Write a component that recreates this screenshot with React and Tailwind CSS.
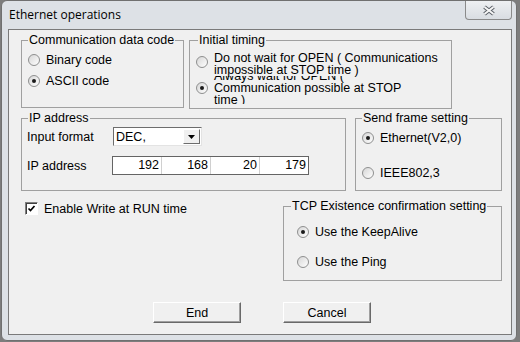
import React from 'react';

const Radio = ({ checked }) => (
  <span className="flex h-[12px] w-[12px] shrink-0 items-center justify-center rounded-full border border-[#8e8f8f] bg-linear-to-br from-[#d6d6d6] to-white">
    {checked && <span className="h-[4px] w-[4px] rounded-full bg-[#1a1a1a]" />}
  </span>
);

const Option = ({ checked, children }) => (
  <div className="flex h-[16px] items-center gap-[6px]">
    <Radio checked={checked} />
    <span className="whitespace-nowrap leading-[14px]">{children}</span>
  </div>
);

// group box with its caption laid over the top line
const Group = ({ label, labelClass = 'left-[6px]', className, children }) => (
  <div className={`relative border border-[#a0a0a0] ${className}`}>
    <span className={`absolute -top-[8px] whitespace-nowrap bg-[#f0f0f0] px-[1px] leading-[14px] ${labelClass}`}>
      {label}
    </span>
    {children}
  </div>
);

const DialogButton = ({ children }) => (
  <button className="h-[21px] w-[88px] border border-t-white border-l-white border-b-[#696969] border-r-[#696969] bg-[#f0f0f0] leading-[14px] shadow-[inset_-1px_-1px_0_#a0a0a0]">
    {children}
  </button>
);

const App = () => {
  const ip = ['192', '168', '20', '179'];

  return (
    <div className="h-[342px] w-[520px] bg-[#7d7d7d] font-['Liberation_Sans',Arial,sans-serif] text-[12.5px] text-black">
      <div className="ml-[1px] flex h-[341px] w-[516px] flex-col rounded-[6px] border border-[#707070] bg-[#dde1e6]">
        {/* Title bar */}
        <div className="flex h-[28px] items-start">
          <span className="ml-[7px] mt-[6px] font-['Open_Sans',sans-serif] text-[12px] leading-[16px]">
            Ethernet operations
          </span>
          <button className="ml-auto mr-[4px] flex h-[19px] w-[47px] items-center justify-center rounded-b-[4px] border border-t-0 border-[#8a8a8a] bg-linear-to-b from-[#eef0f2] to-[#d9dde2]">
            <svg width="14" height="11" viewBox="0 0 14 11">
              <path d="M2.5 2L11.5 9M11.5 2L2.5 9" stroke="#5a5f66" strokeWidth="4" />
              <path d="M2.5 2L11.5 9M11.5 2L2.5 9" stroke="#f6f6f6" strokeWidth="2" />
            </svg>
          </button>
        </div>

        {/* Client area */}
        <div className="ml-[6px] flex h-[306px] w-[504px] flex-col border border-[#7a7a7a] bg-[#f0f0f0] pl-[12px] pr-[9px]">
          <div className="mt-[10px] flex items-start gap-[5px]">
            <Group label="Communication data code" className="h-[68px] w-[163px] pl-[6px] pt-[11px]">
              <div className="flex flex-col gap-[5px]">
                <Option>Binary code</Option>
                <Option checked>ASCII code</Option>
              </div>
            </Group>
            <Group label="Initial timing" labelClass="left-[8px]" className="h-[69px] w-[263px] pl-[6px] pt-[11px]">
              <div className="flex items-start gap-[6px]">
                <span className="mt-[4px]"><Radio /></span>
                <div className="whitespace-nowrap leading-[12px]">
                  <div>Do not wait for OPEN ( Communications</div>
                  <div>impossible at STOP time )</div>
                </div>
              </div>
              <div className="flex h-[28px] items-start gap-[6px] overflow-hidden">
                <span className="mt-[6px]"><Radio checked /></span>
                <div className="-mt-[6px] whitespace-nowrap leading-[12px]">
                  <div>Always wait for OPEN (</div>
                  <div>Communication possible at STOP</div>
                  <div>time )</div>
                </div>
              </div>
            </Group>
          </div>

          <div className="mt-[9px] flex items-start gap-[9px]">
            <Group label="IP address" className="h-[73px] w-[325px] pl-[5px] pt-[8px]">
              <div className="flex h-[19px] items-center">
                <span className="w-[86px] leading-[14px]">Input format</span>
                <div className="flex h-[19px] w-[89px] items-center border border-t-[#6d6d6d] border-l-[#6d6d6d] border-b-[#e3e3e3] border-r-[#e3e3e3] bg-white pl-[2px]">
                  <span className="flex-1 leading-[14px]">DEC,</span>
                  <span className="mr-[1px] flex h-[15px] w-[17px] items-center justify-center border border-t-white border-l-white border-b-[#6d6d6d] border-r-[#6d6d6d] bg-[#f0f0f0]">
                    <svg width="7" height="4" viewBox="0 0 7 4">
                      <path d="M0 0h7L3.5 4z" fill="#000" />
                    </svg>
                  </span>
                </div>
              </div>
              <div className="mt-[10px] flex h-[19px] items-center">
                <span className="w-[85px] leading-[14px]">IP address</span>
                <div className="flex h-[19px] w-[197px] border border-[#646464] bg-white">
                  {ip.map((v, i) => (
                    <span
                      key={v}
                      className={`flex-1 pr-[2px] text-right leading-[17px] ${i < 3 ? 'border-r border-[#d0d0d0]' : ''}`}
                    >
                      {v}
                    </span>
                  ))}
                </div>
              </div>
            </Group>
            <Group label="Send frame setting" className="h-[73px] w-[147px] pl-[6px] pt-[11px]">
              <Option checked>Ethernet(V2,0)</Option>
              <div className="mt-[19px]">
                <Option>IEEE802,3</Option>
              </div>
            </Group>
          </div>

          <div className="mt-[11px] flex items-start">
            <div className="ml-[4px] flex h-[13px] items-center gap-[6px]">
              <span className="flex h-[13px] w-[13px] items-center justify-center border border-t-[#808080] border-l-[#808080] border-b-white border-r-white bg-white shadow-[inset_1px_1px_0_#404040]">
                <svg width="9" height="9" viewBox="0 0 9 9">
                  <path d="M1.5 4.5l2 2L7.5 2" stroke="#000" strokeWidth="1.7" fill="none" />
                </svg>
              </span>
              <span className="whitespace-nowrap leading-[14px]">Enable Write at RUN time</span>
            </div>
            <Group label="TCP Existence confirmation setting" labelClass="left-[7px]" className="ml-auto mt-[4px] h-[75px] w-[219px] pl-[13px] pt-[17px]">
              <Option checked>Use the KeepAlive</Option>
              <div className="mt-[14px]">
                <Option>Use the Ping</Option>
              </div>
            </Group>
          </div>

          <div className="ml-[132px] mt-[21px] flex gap-[42px]">
            <DialogButton>End</DialogButton>
            <DialogButton>Cancel</DialogButton>
          </div>
        </div>
      </div>
    </div>
  );
};

export default App;
